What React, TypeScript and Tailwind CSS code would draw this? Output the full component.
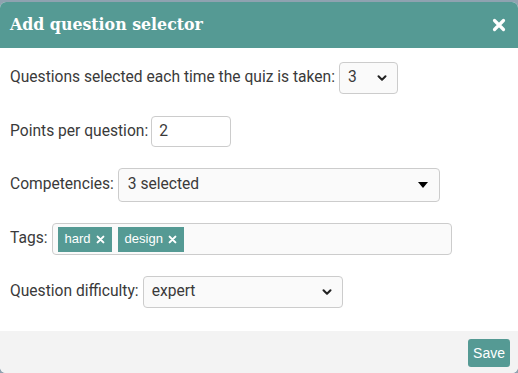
import { ChevronDown } from 'lucide-react';

function Times({ className }: { className?: string }) {
  return (
    <svg viewBox="0 0 14 14" className={className} fill="none">
      <path d="M2.5 2.5 L11.5 11.5 M11.5 2.5 L2.5 11.5" stroke="currentColor" strokeWidth="3.2" strokeLinecap="round" />
    </svg>
  );
}

function SelectBox({ value, width }: { value: string; width: string }) {
  return (
    <div className={`flex h-[32px] items-center justify-between rounded-[4px] border border-[#cccccc] bg-[#fafafa] pl-[8px] pr-[8px] ${width}`}>
      <span>{value}</span>
      <ChevronDown className="h-[14px] w-[14px] text-[#222]" strokeWidth={3.5} />
    </div>
  );
}

function Tag({ label }: { label: string }) {
  return (
    <span className="flex h-[25px] items-center gap-[5px] bg-[#559a94] px-[7px] text-[13px] text-white font-['Liberation_Sans',sans-serif]">
      {label}
      <Times className="h-[9px] w-[9px]" />
    </span>
  );
}

export default function App() {
  return (
    <div className="h-[373px] w-[518px] bg-[#8fa2b0] pt-[2px] font-['Roboto',sans-serif] text-[15.6px] text-[#3a3a3a]">
      <div className="flex h-full flex-col overflow-hidden rounded-[6px] bg-white">
        <div className="flex h-[46px] items-center justify-between bg-[#559a94] pl-[10px] pr-[12px] text-white">
          <h2 className="font-['DejaVu_Serif',serif] text-[15.8px] font-bold">Add question selector</h2>
          <Times className="h-[14px] w-[14px]" />
        </div>

        <div className="flex flex-col pl-[10px] pt-[14px] pb-[23px]">
          <div className="flex items-center gap-[4px]">
            <span>Questions selected each time the quiz is taken:</span>
            <SelectBox value="3" width="w-[59px]" />
          </div>

          <div className="mt-[22px] flex items-center gap-[3px]">
            <span>Points per question:</span>
            <div className="flex h-[31px] w-[80px] items-center rounded-[4px] border border-[#cccccc] bg-white px-[7px]">2</div>
          </div>

          <div className="mt-[21px] flex items-center gap-[4px]">
            <span>Competencies:</span>
            <div className="flex h-[34px] w-[322px] items-center justify-between rounded-[4px] border border-[#cccccc] bg-[#fafafa] pl-[9px] pr-[11px]">
              <span>3 selected</span>
              <svg viewBox="0 0 10 6" className="h-[6px] w-[10px] text-black">
                <path d="M0 0 H10 L5 6 Z" fill="currentColor" />
              </svg>
            </div>
          </div>

          <div className="mt-[21px] flex items-center gap-[4px]">
            <span>Tags:</span>
            <div className="flex h-[32px] w-[400px] items-center gap-[6px] rounded-[4px] border border-[#cccccc] bg-[#fafafa] px-[5px]">
              <Tag label="hard" />
              <Tag label="design" />
            </div>
          </div>

          <div className="mt-[21px] flex items-center gap-[4px]">
            <span>Question difficulty:</span>
            <SelectBox value="expert" width="w-[200px]" />
          </div>
        </div>

        <div className="flex flex-1 items-start justify-end bg-[#f3f3f3] pr-[8px] pt-[8px]">
          <button className="h-[28px] rounded-[3px] bg-[#559a94] px-[5px] text-[14px] text-white font-['Liberation_Sans',sans-serif]">
            Save
          </button>
        </div>
      </div>
    </div>
  );
}
